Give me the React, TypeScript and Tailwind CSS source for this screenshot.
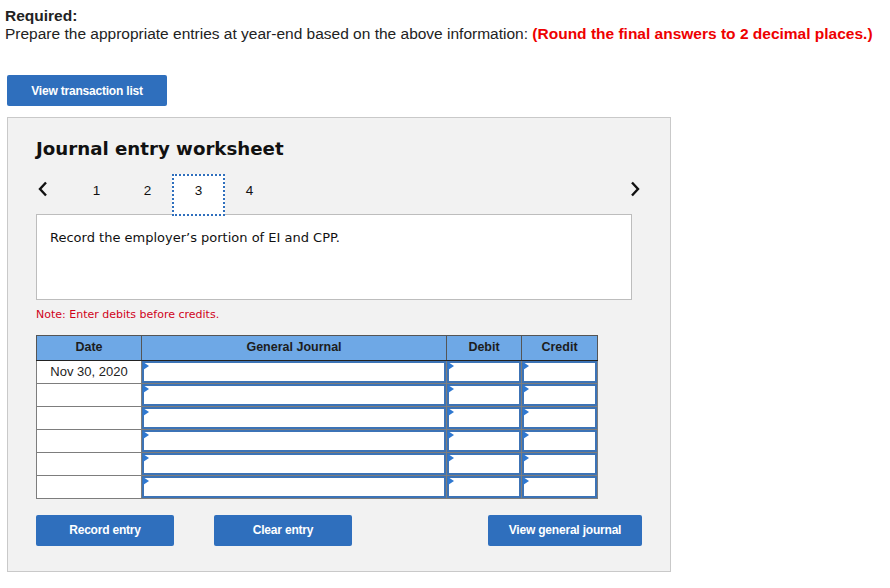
import React from "react";

const rows = ["Nov 30, 2020", "", "", "", "", ""];

const InputCell = () => (
  <td className="h-[23px] border border-[#7d7d7d] p-0">
    <div className="relative h-[22px] border-2 border-[#3c73b6] bg-white">
      <span className="absolute left-[-1px] top-[-1px] h-0 w-0 border-y-[4px] border-l-[6px] border-y-transparent border-l-[#2f78d0]" />
    </div>
  </td>
);

const BlueButton = ({ label, className }: { label: string; className?: string }) => (
  <button
    className={`h-[31px] rounded-[2px] bg-[#2f6fbd] text-[12px] font-bold tracking-[-0.2px] text-white ${className ?? ""}`}
  >
    {label}
  </button>
);

const Chevron = ({ dir }: { dir: "left" | "right" }) => (
  <svg width="10" height="16" viewBox="0 0 10 16" className="shrink-0">
    <path
      d={dir === "left" ? "M8 1.5 L2 8 L8 14.5" : "M2 1.5 L8 8 L2 14.5"}
      fill="none"
      stroke="#111"
      strokeWidth="2.4"
    />
  </svg>
);

export default function App() {
  const [tab, setTab] = React.useState(3);

  return (
    <div className="h-[588px] w-[890px] overflow-hidden bg-white font-['Liberation_Sans',Arial,sans-serif] text-[#222]">
      <div className="pl-[5px] pt-[7px]">
        <div className="text-[15.5px] font-bold leading-[18px]">Required:</div>
        <div className="text-[15.5px] leading-[18px]">
          Prepare the appropriate entries at year-end based on the above information:{" "}
          <span className="font-bold text-[#ee0000]">(Round the final answers to 2 decimal places.)</span>
        </div>
      </div>

      <div className="pl-[7px] pt-[32px]">
        <BlueButton label="View transaction list" className="w-[160px]" />
      </div>

      <div className="mx-[7px] mt-[11px] h-[455px] w-[664px] border border-[#c9c9c9] bg-[#f2f2f2] px-[28px] pt-[20px]">
        <h2 className="font-['DejaVu_Sans',Verdana,sans-serif] text-[18.2px] font-bold leading-[22px] text-[#111]">
          Journal entry worksheet
        </h2>

        <div className="mt-[14px] flex h-[42px] items-start font-['Liberation_Sans',Arial,sans-serif] text-[13.5px] text-[#111]">
          <span className="ml-[2px] mr-[22px] flex pt-[7px]">
            <Chevron dir="left" />
          </span>
          {[1, 2, 3, 4].map((n) => (
            <button
              key={n}
              onClick={() => setTab(n)}
              className={`relative z-10 -mr-[2px] flex h-[42px] w-[53px] justify-center ${
                tab === n ? "border-2 border-dotted border-[#2f6fbd] bg-white pt-[5px]" : "pt-[7px]"
              }`}
            >
              {n}
            </button>
          ))}
          <span className="ml-auto mr-[2px] flex pt-[7px]">
            <Chevron dir="right" />
          </span>
        </div>

        <div className="-mt-[2px] h-[86px] w-[596px] border border-[#bdbdbd] bg-white px-[13px] pt-[13px] font-['DejaVu_Sans',Verdana,sans-serif] text-[13px] text-[#111]">
          Record the employer’s portion of EI and CPP.
        </div>

        <div className="mt-[7px] font-['DejaVu_Sans',Verdana,sans-serif] text-[11px] text-[#d0021b]">
          Note: Enter debits before credits.
        </div>

        <table className="mt-[11px] w-[562px] border-collapse border border-[#6d6d6d] text-[12.5px]">
          <thead>
            <tr className="h-[25px] bg-[#6ea8e6] font-bold text-[#1d1d1d]">
              <th className="w-[105px] border border-[#555] border-b-[#222] font-bold">Date</th>
              <th className="w-[305px] border border-[#555] border-b-[#222] font-bold">General Journal</th>
              <th className="w-[75px] border border-[#555] border-b-[#222] font-bold">Debit</th>
              <th className="w-[76px] border border-[#555] border-b-[#222] font-bold">Credit</th>
            </tr>
          </thead>
          <tbody>
            {rows.map((d, i) => (
              <tr key={i} className="h-[23px]">
                <td className="border border-[#7d7d7d] bg-white text-center text-[13px] text-[#222]">{d}</td>
                <InputCell />
                <InputCell />
                <InputCell />
              </tr>
            ))}
          </tbody>
        </table>

        <div className="mt-[16px] flex">
          <BlueButton label="Record entry" className="w-[138px]" />
          <BlueButton label="Clear entry" className="ml-[40px] w-[138px]" />
          <BlueButton label="View general journal" className="ml-[136px] w-[154px]" />
        </div>
      </div>
    </div>
  );
}
